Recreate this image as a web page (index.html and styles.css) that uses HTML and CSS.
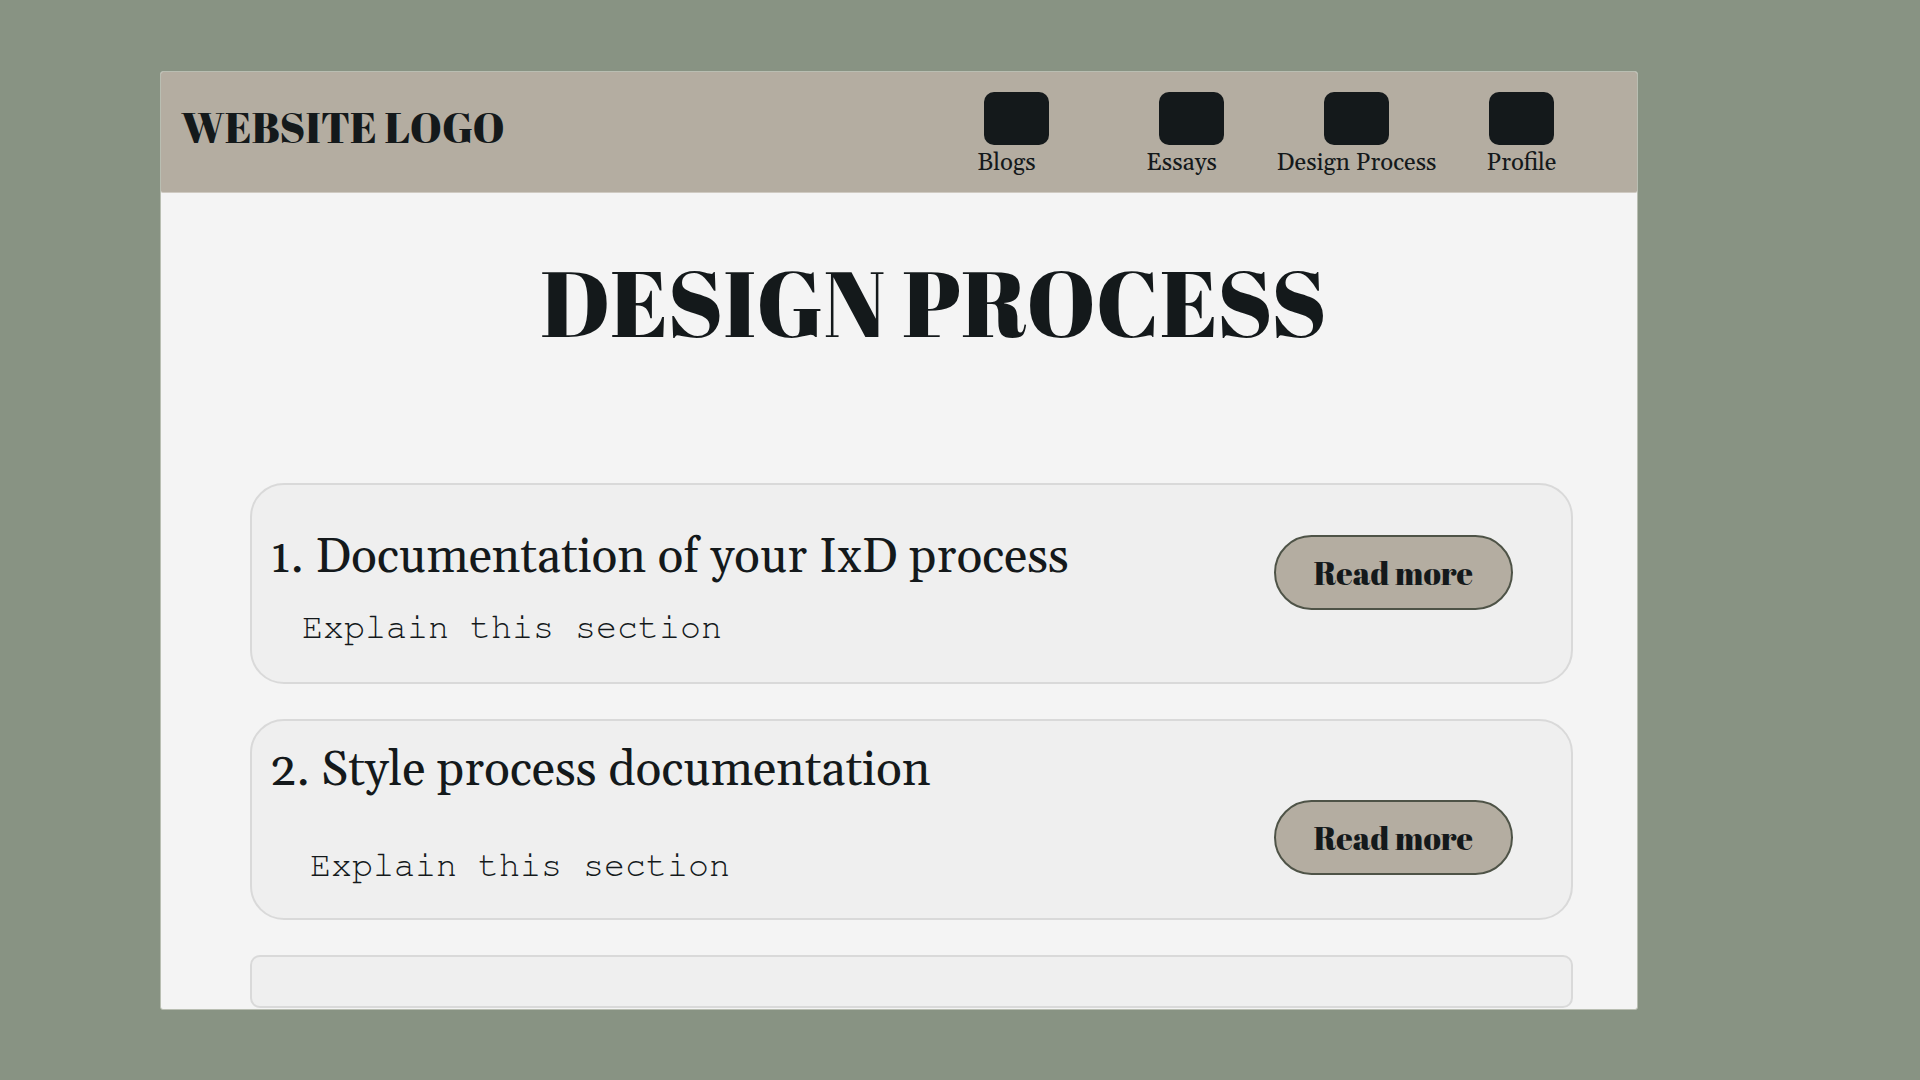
FILE: index.html
```html
<!DOCTYPE html>
<html lang="en">
<head>
  <meta charset="utf-8">
  <meta name="viewport" content="width=device-width, initial-scale=1">
  <title>Design Process</title>
  <link rel="stylesheet" href="styles.css">
</head>
<body>
  <div class="page">
    <header class="header">
      <div class="logo">WEBSITE LOGO</div>
      <nav class="nav">
        <a class="nav-item nav-item-shifted" href="#blogs"><span class="nav-icon"></span><span class="nav-label">Blogs</span></a>
        <a class="nav-item nav-item-shifted" href="#essays"><span class="nav-icon"></span><span class="nav-label">Essays</span></a>
        <a class="nav-item" href="#process"><span class="nav-icon"></span><span class="nav-label">Design Process</span></a>
        <a class="nav-item" href="#profile"><span class="nav-icon"></span><span class="nav-label">Profile</span></a>
      </nav>
    </header>
    <main class="main">
      <h1 class="title">DESIGN PROCESS</h1>
      <div class="cards">
        <article class="card">
          <div class="card-text">
            <h2 class="card-title">1. Documentation of your IxD process</h2>
            <p class="card-note">Explain this section</p>
          </div>
          <button class="button" type="button">Read more</button>
        </article>
        <article class="card card-spread">
          <div class="card-text">
            <h2 class="card-title">2. Style process documentation</h2>
            <p class="card-note">Explain this section</p>
          </div>
          <button class="button" type="button">Read more</button>
        </article>
        <article class="card card-empty"></article>
      </div>
    </main>
  </div>
</body>
</html>
```
FILE: styles.css
```css
* {
  box-sizing: border-box;
}

body {
  margin: 0;
  padding: 71px 282px 71px 160px;
  background: #889383;
  color: #14191b;
  font-family: Gelasio, Georgia, "Liberation Serif", serif;
}

.page {
  display: flex;
  flex-direction: column;
  min-height: calc(100vh - 142px);
  border: 1px solid #b9beb2;
  border-radius: 3px;
  background: #f4f4f4;
}

.header {
  display: flex;
  justify-content: space-between;
  align-items: flex-start;
  padding: 20px 33px 14px 20px;
  border-bottom: 1px solid #cfcac2;
  border-radius: 2px;
  background: #b4ada1;
}

.logo {
  margin-top: 12px;
  font: 43px/46px "Abril Fatface", "Liberation Serif", serif;
}

.nav {
  display: grid;
  grid-template-columns: 185px 165px 165px 165px;
}

.nav-item {
  display: flex;
  flex-direction: column;
  align-items: center;
  gap: 3px;
  color: inherit;
  text-decoration: none;
}

.nav-icon {
  width: 65px;
  height: 53px;
  border-radius: 10px;
  background: #14191b;
}

.nav-label {
  font-size: 24px;
  line-height: 30px;
  white-space: nowrap;
}

.nav-item-shifted .nav-label {
  padding-right: 20px;
}

.main {
  flex: 1;
  padding: 59px 64px 1px 89px;
}

.title {
  margin: 0 0 131px;
  padding-left: 44px;
  text-align: center;
  font: 93px/100px "Abril Fatface", "Liberation Serif", serif;
}

.cards {
  display: flex;
  flex-direction: column;
  gap: 35px;
}

.card {
  display: flex;
  justify-content: space-between;
  align-items: flex-start;
  min-height: 201px;
  padding: 43px 58px 31px 18px;
  border: 2px solid #d9d9d9;
  border-radius: 34px;
  background: #efefef;
}

.card-title {
  margin: 0 0 20px;
  font-size: 48px;
  font-weight: normal;
  line-height: 60px;
}

.card-note {
  margin: 0;
  padding-left: 32px;
  font: 35px/40px FreeMono, "Liberation Mono", monospace;
}

.button {
  margin-top: 7px;
  padding: 16px 38px;
  border: 2px solid #4e5347;
  border-radius: 38px;
  background: #b4ada1;
  color: inherit;
  font: 32px/39px "Abril Fatface", "Liberation Serif", serif;
  white-space: nowrap;
}

.card-spread {
  padding-top: 20px;
}

.card-spread .card-title {
  margin-bottom: 45px;
}

.card-spread .card-note {
  padding-left: 40px;
}

.card-spread .button {
  margin-top: 59px;
}

.card-empty {
  min-height: 53px;
  padding: 0;
  border-radius: 10px;
}
```
